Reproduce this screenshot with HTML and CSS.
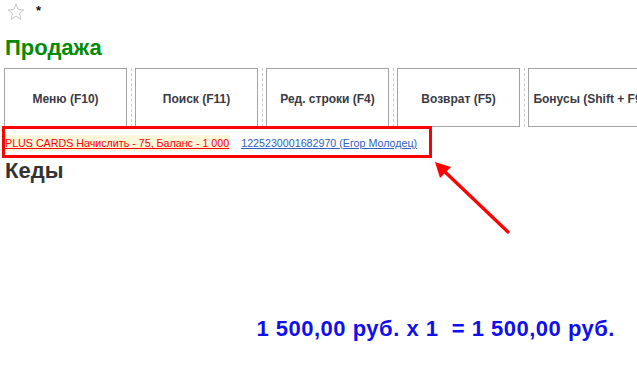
FILE: index.html
```html
<!DOCTYPE html>
<html lang="ru">
<head>
<meta charset="utf-8">
<link rel="stylesheet" href="styles.css">
</head>
<body>
<div class="page">
  <div class="topbar">
    <svg class="star" width="18" height="18" viewBox="0 0 18 18">
      <polygon points="9,1.2 11.2,6.6 16.8,6.9 12.5,10.5 13.9,16.2 9,13.1 4.1,16.2 5.5,10.5 1.2,6.9 6.8,6.6" fill="none" stroke="#c4c4c4" stroke-width="1"/>
    </svg>
    <span class="mark">*</span>
  </div>
  <h1 class="title">Продажа</h1>
  <div class="toolbar">
    <div class="btn">Меню (F10)</div>
    <div class="sep"></div>
    <div class="btn">Поиск (F11)</div>
    <div class="sep"></div>
    <div class="btn">Ред. строки (F4)</div>
    <div class="sep"></div>
    <div class="btn">Возврат (F5)</div>
    <div class="sep"></div>
    <div class="btn">Бонусы (Shift + F9)</div>
  </div>
  <div class="cards">
    <a class="bonus">PLUS CARDS Начислить - 75, Баланс - 1 000</a>
    <a class="card">1225230001682970 (Егор Молодец)</a>
  </div>
  <div class="item">Кеды</div>
  <div class="total">1 500,00 руб. x 1&nbsp; = 1 500,00 руб.</div>

  <div class="callout"></div>
  <svg class="arrow" width="637" height="368" viewBox="0 0 637 368">
    <line x1="508" y1="232" x2="443" y2="170" stroke="#ff0000" stroke-width="3.2" stroke-linecap="round"/>
    <polygon points="435,162 451,167 440,178" fill="#ff0000"/>
  </svg>
</div>
</body>
</html>
```

FILE: styles.css
```css
html, body {
  margin: 0;
  padding: 0;
  background: #ffffff;
}

body {
  font-family: "Liberation Sans", Arial, sans-serif;
  overflow: hidden;
}

.page {
  position: relative;
  height: 368px;
  width: 637px;
  overflow: hidden;
  display: flex;
  flex-direction: column;
  box-sizing: border-box;
}

.topbar {
  display: flex;
  align-items: flex-start;
  height: 36px;
  padding-left: 7px;
  padding-top: 3px;
  box-sizing: border-box;
}

.star {
  display: block;
}

.mark {
  margin-left: 11px;
  font-size: 13px;
  font-weight: bold;
  line-height: 12px;
  color: #111111;
  margin-top: 2px;
}

.title {
  margin: 0 0 8px 5px;
  font-size: 22px;
  line-height: 24px;
  font-weight: bold;
  color: #008c00;
}

.toolbar {
  display: flex;
  flex-wrap: nowrap;
  margin-left: 4px;
  height: 59px;
}

.btn {
  flex: 0 0 123px;
  box-sizing: border-box;
  border: 1px solid #a4a4a4;
  display: flex;
  align-items: center;
  justify-content: center;
  white-space: nowrap;
  font-size: 12px;
  font-weight: bold;
  color: #3a3a44;
  padding-top: 2px;
}

.sep {
  flex: 0 0 8px;
  display: flex;
  justify-content: center;
}

.sep::before {
  content: "";
  display: block;
  width: 0;
  height: 100%;
  border-left: 1px dashed #cccccc;
}

.cards {
  margin: 8px 0 0 5px;
  font-size: 10.7px;
  line-height: 16px;
  white-space: nowrap;
}

.bonus {
  color: #ff0000;
  text-decoration: underline;
  background: #fdf6d8;
  padding: 2px 1px;
  margin-left: -1px;
}

.card {
  margin-left: 8px;
  color: #2f5fbf;
  text-decoration: underline;
}

.item {
  margin: 8px 0 0 5px;
  font-size: 22px;
  line-height: 24px;
  font-weight: bold;
  color: #333333;
}

.total {
  margin-top: auto;
  margin-bottom: 27px;
  align-self: flex-end;
  margin-right: 22px;
  font-size: 22px;
  letter-spacing: 0.5px;
  line-height: 24px;
  font-weight: bold;
  color: #1010ee;
  white-space: nowrap;
}

.callout {
  position: absolute;
  left: 2px;
  top: 126px;
  width: 430px;
  height: 32px;
  box-sizing: border-box;
  border: 3px solid #ff0000;
}

.arrow {
  position: absolute;
  left: 0;
  top: 0;
  pointer-events: none;
}
```
